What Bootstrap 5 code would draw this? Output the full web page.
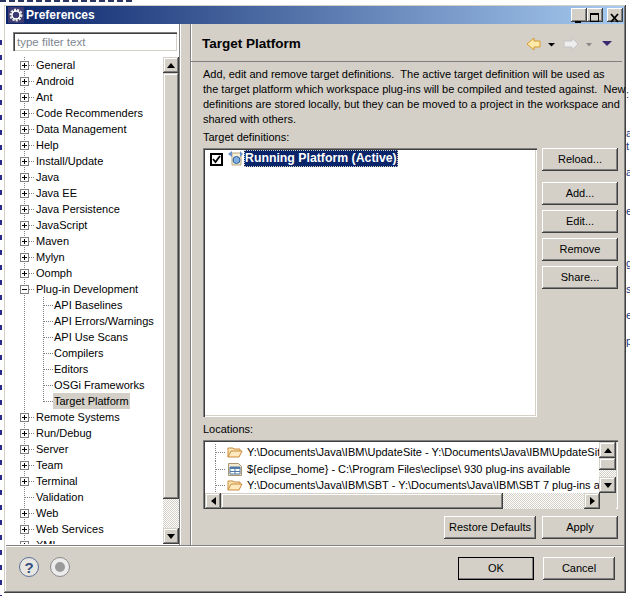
<!DOCTYPE html>
<html lang="en"><head><meta charset="utf-8"><title>Preferences</title>
<link rel="stylesheet" href="https://cdn.jsdelivr.net/npm/bootstrap@5.3.0/dist/css/bootstrap.min.css">
<style>
:root{--f:#d4d0c8;}
html,body{margin:0;height:596px;width:630px;overflow:hidden;}
body{font:11px/15px "Liberation Sans",sans-serif;color:#000;padding:5px 0 3px 4px;
background:repeating-linear-gradient(#2a2a8a 0 5px,transparent 5px 15px) 0 40px/2px 100% no-repeat,repeating-linear-gradient(90deg,#2b3560 0 6px,transparent 6px 9px) 0 0/135px 2px no-repeat,#fff;}
.win{flex:none;width:622px;height:588px;background:var(--f);box-shadow:inset -1px -1px #404040,inset 1px 1px var(--f),inset -2px -2px #808080,inset 2px 2px #fff;padding:1px 2px 2px 0;overflow:hidden;}
.behind{flex:none;width:4px;overflow:hidden;font-size:11px;line-height:13px;color:#1a3a8a;white-space:nowrap;margin-top:-8px;}
.ttl{height:18px;background:linear-gradient(90deg,#0a246a,#a6caf0);color:#fff;font:bold 12px/18px "Liberation Sans",sans-serif;padding:0 1px 0 2px;margin-left:2px;flex:none;}
.ttl svg{margin-right:2px}
.cap{width:16px;height:14px;background:var(--f);box-shadow:inset -1px -1px #404040,inset 1px 1px #fff,inset -2px -2px #808080;padding:0;border:0;}
.main{height:521px;flex:none;}
.lft{width:173px;background:#fff;margin-left:2px;height:521px;}
.flt.form-control{width:164px;height:19px;margin:8px 0 0 7px;padding:0 4px;font-size:11.5px;line-height:15px;border-radius:0;border:0;background:#fff;color:#808080;box-shadow:inset 1px 1px #808080,inset 2px 2px #404040,inset -1px -1px var(--f);}
.flt::placeholder{color:#808890;opacity:1}
.trw{margin-top:6px;height:487px;}
.tree{width:157px;overflow:hidden;margin:0;height:487px;}
.tree li{height:16px;line-height:16px;padding-left:30px;position:relative;white-space:nowrap;
background-image:linear-gradient(#808080 50%,transparent 50%),repeating-linear-gradient(90deg,#808080 0 1px,transparent 1px 2px);
background-size:1px 2px,9px 1px;background-position:18px 0,19px 8px;background-repeat:repeat-y,no-repeat;}
.tree li.sub{padding-left:48px;background-image:linear-gradient(#808080 50%,transparent 50%),linear-gradient(#808080 50%,transparent 50%),repeating-linear-gradient(90deg,#808080 0 1px,transparent 1px 2px);background-size:1px 2px,1px 2px,9px 1px;background-position:18px 0,37px 0,38px 8px;background-repeat:repeat-y,repeat-y,no-repeat;}
.tree li.sub.end{background-size:1px 2px,1px 9px,9px 1px;background-repeat:repeat-y,no-repeat,no-repeat;background-image:linear-gradient(#808080 50%,transparent 50%),repeating-linear-gradient(#808080 0 1px,transparent 1px 2px),repeating-linear-gradient(90deg,#808080 0 1px,transparent 1px 2px);}
.exp{position:absolute;left:14px;top:4px;width:9px;height:9px;border:1px solid #808080;background:linear-gradient(#000,#000) center/5px 1px no-repeat,linear-gradient(#000,#000) center/1px 5px no-repeat,#fff;}
.exp.open{background:linear-gradient(#000,#000) center/5px 1px no-repeat,#fff;}
.sel{background:var(--f);display:inline-block;height:16px;padding:0 1px;margin-left:-1px;}
.sb{width:16px;background:repeating-conic-gradient(#fff 0 25%,var(--f) 0 50%) 0 0/2px 2px;}
.wb{flex:none;width:16px;height:16px;background:var(--f);box-shadow:inset -1px -1px #404040,inset 1px 1px var(--f),inset -2px -2px #808080,inset 2px 2px #fff;}
.thumb{flex:none;background:var(--f);box-shadow:inset -1px -1px #404040,inset 1px 1px var(--f),inset -2px -2px #808080,inset 2px 2px #fff;}
.tree-thumb{height:426px;}
.sash{width:11px;background:var(--f);border-left:1px solid #808080;box-shadow:inset 1px 0 #fff;}
.rgt{width:431px;border-left:1px solid #808080;box-shadow:inset 1px 0 #fff;padding-left:12px;height:521px;}
.hd{height:38px;box-shadow:inset 0 -2px 0 -1px #808080,inset 0 -1px 0 #fff;margin-left:-12px;padding:1px 0 0 11px;width:431px;align-items:center;}
.hd h1{font:bold 13.5px/20px "Liberation Sans",sans-serif;margin:0;}
.desc{margin:5px 0 0;width:420px;height:60px;white-space:nowrap;}
.lbl{line-height:15px;margin-top:3px;height:18px;}
.tbl{width:334px;height:269px;background:#fff;box-shadow:inset 1px 1px #808080,inset 2px 2px #404040,inset -1px -1px #fff,inset -2px -2px var(--f);padding:5px 0 0 7px;}
.chk{width:13px;height:13px;background:#fff;border:2px solid #000;display:flex;}
.tgt{margin-top:-3px;}
.run{background:#0a246a;color:#fff;font-weight:bold;outline:1px dotted #d4d0c8;outline-offset:-1px;padding:0 1px;height:17px;line-height:17px;white-space:nowrap;font-size:12.3px;margin-top:-3px;}
.wbtn.btn{display:block;font:11px/15px "Liberation Sans",sans-serif;width:76px;height:23px;padding:0;border:0;border-radius:0;background:var(--f);color:#000;box-shadow:inset -1px -1px #404040,inset 1px 1px #fff,inset -2px -2px #808080;}
.col-b{width:76px;margin-left:5px;}
.g11{margin-top:11px}.g5{margin-top:5px}
.loc-l{margin-top:5px}
.loc{width:415px;height:69px;background:#fff;box-shadow:inset 1px 1px #808080,inset 2px 2px #404040,inset -1px -1px #fff,inset -2px -2px var(--f);padding:2px;}
.loc-in{height:51px;}
.loc-rows{width:396px;overflow:hidden;margin:0;padding:2px 0 0 0;height:51px;}
.loc-rows li{height:16.5px;line-height:16px;padding-left:42px;white-space:nowrap;position:relative;
background-image:linear-gradient(#808080 50%,transparent 50%),repeating-linear-gradient(90deg,#808080 0 1px,transparent 1px 2px);background-size:1px 2px,10px 1px;background-position:10px 0,11px 8px;background-repeat:repeat-y,no-repeat;}
.loc-rows li svg{position:absolute;left:22px;top:0}
.vs{width:17px;background:repeating-conic-gradient(#fff 0 25%,var(--f) 0 50%) 0 0/2px 2px}
.vth{height:12px}.hth{width:282px}
.hs{height:16px;background:repeating-conic-gradient(#fff 0 25%,var(--f) 0 50%) 0 0/2px 2px;width:395px;}
.cor{width:16px;background:var(--f);height:16px}
.acts{margin-top:7px;width:415px;gap:6px;}
.rsb.btn{width:92px;}
.foot{height:46px;flex:none;box-shadow:inset 0 1px #808080,inset 0 2px #fff;margin-left:2px;padding:12px 9px 0 13px;}
.ok.btn{outline:1px solid #000;outline-offset:-1px;}
.ok2.btn{margin-left:9px;width:72px;}
.rnd{width:20px;height:20px;border-radius:50%;background:#e8e6e0;border:1.5px solid #5a6f96;display:flex;align-items:center;justify-content:center;font:bold 15px/1 "Liberation Sans",sans-serif;color:#36507f;}
.rnd2{border-color:#8a8a8a;background:#ececec;margin-left:11px;}
.rnd2 i{display:block;width:10px;height:10px;border-radius:50%;background:#9a9a9a;}
.navi{margin-right:6px}
</style></head>
<body class="d-flex align-items-start">
<div class="win d-flex flex-column">
 <div class="ttl d-flex align-items-center">
  <svg width="16" height="16" viewBox="0 0 16 16"><rect width="16" height="16" fill="#3c3a70"/><circle cx="8" cy="8" r="5" fill="none" stroke="#e8e6e0" stroke-width="3" stroke-dasharray="2 1"/><circle cx="8" cy="8" r="4" fill="none" stroke="#fff" stroke-width="1.4"/></svg>
  <span class="flex-grow-1">Preferences</span>
  <button class="cap" aria-label="min"><svg width="16" height="14"><rect x="4" y="10" width="6" height="2"/></svg></button>
  <button class="cap me-1" aria-label="max"><svg width="16" height="14"><rect x="3.500" y="2.500" width="8" height="8" fill="none" stroke="#000"/><rect x="3" y="2" width="9" height="2"/></svg></button>
  <button class="cap" aria-label="close"><svg width="16" height="14"><path d="M4 3l7 8M11 3l-7 8" stroke="#000" stroke-width="1.8"/></svg></button>
 </div>
 <div class="main d-flex">
  <div class="lft">
   <input class="form-control flt" placeholder="type filter text">
   <div class="trw d-flex">
    <ul class="tree list-unstyled">
     <li><i class="exp"></i>General</li><li><i class="exp"></i>Android</li><li><i class="exp"></i>Ant</li><li><i class="exp"></i>Code Recommenders</li><li><i class="exp"></i>Data Management</li><li><i class="exp"></i>Help</li><li><i class="exp"></i>Install/Update</li><li><i class="exp"></i>Java</li><li><i class="exp"></i>Java EE</li><li><i class="exp"></i>Java Persistence</li><li><i class="exp"></i>JavaScript</li><li><i class="exp"></i>Maven</li><li><i class="exp"></i>Mylyn</li><li><i class="exp"></i>Oomph</li>
     <li><i class="exp open"></i>Plug-in Development</li>
     <li class="sub">API Baselines</li><li class="sub">API Errors/Warnings</li><li class="sub">API Use Scans</li><li class="sub">Compilers</li><li class="sub">Editors</li><li class="sub">OSGi Frameworks</li><li class="sub end"><span class="sel">Target Platform</span></li>
     <li><i class="exp"></i>Remote Systems</li><li><i class="exp"></i>Run/Debug</li><li><i class="exp"></i>Server</li><li><i class="exp"></i>Team</li><li><i class="exp"></i>Terminal</li><li>Validation</li><li><i class="exp"></i>Web</li><li><i class="exp"></i>Web Services</li><li><i class="exp"></i>XML</li>
    </ul>
    <div class="sb d-flex flex-column">
     <div class="wb d-flex align-items-center justify-content-center"><svg width="8" height="5"><path d="M4 0l4 5H0z"/></svg></div>
     <div class="thumb tree-thumb"></div>
     <div class="flex-grow-1"></div>
     <div class="wb d-flex align-items-center justify-content-center"><svg width="8" height="5"><path d="M0 0h8L4 5z"/></svg></div>
    </div>
   </div>
  </div>
  <div class="sash"></div>
  <div class="rgt">
   <div class="hd d-flex">
    <h1 class="flex-grow-1">Target Platform</h1>
    <svg class="navi" width="90" height="16" viewBox="0 0 90 16"><path d="M1 8l7-6v3h6v6H8v3z" fill="#fde9a8" stroke="#d79a2e"/><path d="M22 7h7l-3.500 3.500z" fill="#000"/><path d="M52 8l-6-6v3h-8v6h8v3z" fill="#eeeeee" stroke="#c4c4c4"/><path d="M60 7h6l-3 3.500z" fill="#8a8a8a"/><path d="M76 5h10l-5 5z" fill="#3c2a70"/></svg>
   </div>
   <p class="desc">Add, edit and remove target definitions.&nbsp; The active target definition will be used as<br>the target platform which workspace plug-ins will be compiled and tested against.&nbsp; New<br>definitions are stored locally, but they can be moved to a project in the workspace and<br>shared with others.</p>
   <div class="lbl">Target definitions:</div>
   <div class="d-flex">
    <div class="tbl d-flex align-items-start">
     <span class="chk align-items-center justify-content-center"><svg width="9" height="9" viewBox="0 0 9 9"><path d="M1 4l2.500 3L8 1" fill="none" stroke="#000" stroke-width="1.800"/></svg></span>
     <svg class="ms-1 tgt" width="17" height="17" viewBox="0 0 17 17"><path d="M5 3h9v12H5z" fill="#f6efdc" stroke="#b9a67c"/><path d="M1 4l4-3v6zM13 1l3 3-3 3z" fill="#6a92c8"/><circle cx="9.500" cy="10" r="3.500" fill="#7fb0df" stroke="#2f5f9e"/></svg>
     <span class="run">Running Platform (Active)</span>
    </div>
    <div class="col-b d-flex flex-column">
     <button class="btn wbtn">Reload...</button>
     <button class="btn wbtn g11">Add...</button>
     <button class="btn wbtn g5">Edit...</button>
     <button class="btn wbtn g5">Remove</button>
     <button class="btn wbtn g5">Share...</button>
    </div>
   </div>
   <div class="lbl loc-l">Locations:</div>
   <div class="loc">
    <div class="loc-in d-flex">
     <ul class="loc-rows list-unstyled">
      <li><svg width="16" height="16" viewBox="0 0 16 16"><path d="M1 13V4h5l1 1h6v2" fill="#fbe7b8" stroke="#c98a3a"/><path d="M1 13l3-6h11l-3 6z" fill="#fde9bd" stroke="#c98a3a"/></svg>Y:\Documents\Java\IBM\UpdateSite - Y:\Documents\Java\IBM\UpdateSite 930 plug-ins</li>
      <li><svg width="16" height="16" viewBox="0 0 16 16"><path d="M1.500 2.500h10l3 3v9h-13z" fill="#f2e7cf" stroke="#a89570"/><path d="M3 6h10v7H3z" fill="#fff" stroke="#4f7aa8"/><path d="M3 6h10v2H3z" fill="#4f7aa8"/><path d="M8 8v5M3 10.500h10" stroke="#4f7aa8"/></svg>${eclipse_home} - C:\Program Files\eclipse\ 930 plug-ins available</li>
      <li><svg width="16" height="16" viewBox="0 0 16 16"><path d="M1 13V4h5l1 1h6v2" fill="#fbe7b8" stroke="#c98a3a"/><path d="M1 13l3-6h11l-3 6z" fill="#fde9bd" stroke="#c98a3a"/></svg>Y:\Documents\Java\IBM\SBT - Y:\Documents\Java\IBM\SBT 7 plug-ins available</li>
     </ul>
     <div class="vs d-flex flex-column">
      <div class="wb w-100 d-flex align-items-center justify-content-center"><svg width="8" height="5"><path d="M4 0l4 5H0z"/></svg></div>
      <div class="thumb vth"></div>
      <div class="flex-grow-1"></div>
      <div class="wb w-100 d-flex align-items-center justify-content-center"><svg width="8" height="5"><path d="M0 0h8L4 5z"/></svg></div>
     </div>
    </div>
    <div class="d-flex">
     <div class="hs d-flex">
      <div class="wb d-flex align-items-center justify-content-center"><svg width="5" height="8"><path d="M5 0v8L0 4z"/></svg></div>
      <div class="thumb hth"></div>
      <div class="flex-grow-1"></div>
      <div class="wb d-flex align-items-center justify-content-center"><svg width="5" height="8"><path d="M0 0l5 4-5 4z"/></svg></div>
     </div>
     <div class="cor flex-grow-1"></div>
    </div>
   </div>
   <div class="d-flex justify-content-end acts">
    <button class="btn wbtn rsb">Restore Defaults</button>
    <button class="btn wbtn">Apply</button>
   </div>
  </div>
 </div>
 <div class="foot d-flex align-items-start">
  <span class="rnd">?</span>
  <span class="rnd rnd2"><i></i></span>
  <div class="ms-auto d-flex">
   <button class="btn wbtn ok">OK</button>
   <button class="btn wbtn ok2">Cancel</button>
  </div>
 </div>
</div>
<div class="behind" aria-hidden="true"><br><br><br><br><br><br><br>:<br><br><br>a<br>t<br><br>a<br><br><br>e<br><br><br><br>g<br><br>s<br><br>e<br><br>p</div>
</body></html>
